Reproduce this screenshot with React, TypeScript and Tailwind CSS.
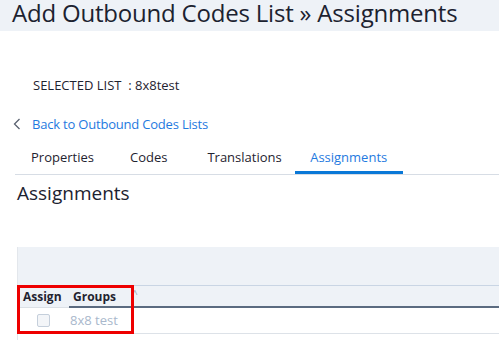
import React from "react";

export default function App() {
  const font = { fontFamily: "'Open Sans', 'Noto Sans', sans-serif" };
  return (
    <div className="w-[499px] h-[340px] overflow-hidden bg-white text-[#1f2330]" style={font}>
      <div className="h-[31px] bg-[#eef2f7] pl-[12px] pt-[1px]">
        <h1 className="text-[24px] leading-[24px] font-medium tracking-[-0.2px] text-[#1c2230] whitespace-nowrap">
          Add Outbound Codes List » Assignments
        </h1>
      </div>
      <div className="pl-[33px] pt-[45px] text-[13px] leading-[18px] text-[#1f2330]">
        SELECTED LIST&nbsp; : 8x8test
      </div>
      <div className="flex items-center pl-[13px] pt-[21px] text-[13px] leading-[18px]">
        <svg width="8" height="12" viewBox="0 0 8 12" className="mr-[11px]">
          <path d="M6.5 1 L1.5 6 L6.5 11" fill="none" stroke="#5a6270" strokeWidth="1.3" />
        </svg>
        <span className="text-[#1f7ae0] tracking-[-0.2px]">Back to Outbound Codes Lists</span>
      </div>
      <div className="ml-[15px] mt-[6px] flex border-b border-[#d7dde5] text-[13px] leading-[18px]">
        <div className="px-[16px] pt-[9px] pb-[8px]">Properties</div>
        <div className="px-[20px] pt-[9px] pb-[8px]">Codes</div>
        <div className="px-[20px] pt-[9px] pb-[8px]">Translations</div>
        <div className="ml-[-7px] w-[108px] text-center pt-[9px] pb-[5px] border-b-[3px] border-[#0a78d7] text-[#1f7ae0]">
          Assignments
        </div>
      </div>
      <h2 className="pl-[17px] pt-[6px] text-[19px] leading-[24px] text-[#1c2230]">Assignments</h2>
      <div className="ml-[17px] mt-[42px] border-l border-[#e3e7ec]">
        <div className="h-[39px] bg-[#eef2f7] border-b border-[#c9d5e4]" />
        <div className="relative">
          <div className="flex h-[22px] bg-[#eef2f7] text-[12px] font-bold leading-[22px]">
            <div className="w-[51px] pl-[5px] border-b border-[#dbe0e6]">Assign</div>
            <div className="flex-1 pl-[4px] border-b-2 border-[#5b6b80] relative">
              Groups
              <span className="absolute left-[63px] top-[-3px] text-[10px] font-normal text-[#9aa4b0]">^</span>
            </div>
          </div>
          <div className="flex h-[26px] items-center border-b border-[#dde2e8] text-[13px]">
            <div className="w-[51px] flex justify-center">
              <div className="w-[13px] h-[13px] rounded-[2px] border border-[#c5cfdb] bg-[#f3f5f8]" />
            </div>
            <div className="pl-[1px] text-[#a9b8cc]">8x8 test</div>
          </div>
          <div className="absolute left-[-1px] top-[-1px] w-[117px] h-[49px] border-[3px] border-[#ee0000]" />
        </div>
        <div className="h-[10px]" />
      </div>
    </div>
  );
}
